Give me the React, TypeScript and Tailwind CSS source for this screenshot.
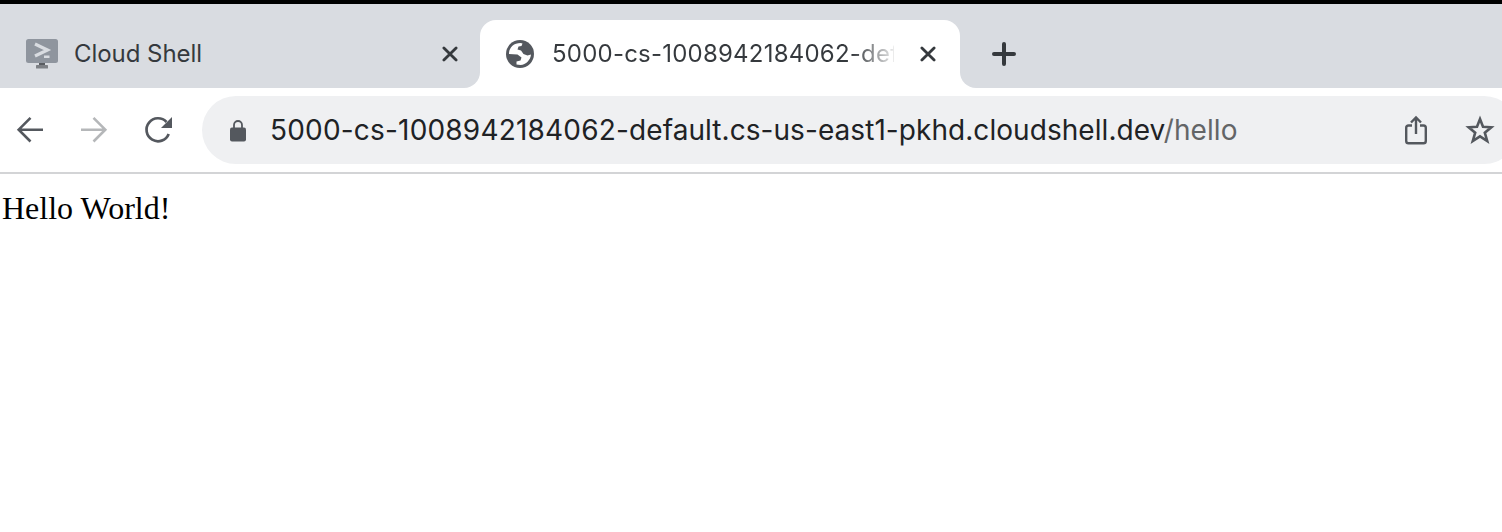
import React from "react";

function CloseIcon() {
  return (
    <svg className="size-4 shrink-0" viewBox="0 0 16 16" fill="none" stroke="#35393d" strokeWidth="2.8" strokeLinecap="round">
      <path d="M1.9 1.9L14.1 14.1M14.1 1.9L1.9 14.1" />
    </svg>
  );
}

function ShellIcon() {
  return (
    <svg className="h-[30px] w-8 shrink-0" viewBox="0 0 32 30">
      <rect width="32" height="24" rx="2.5" fill="#8f959e" />
      <path d="M9 5L21.5 11L9 17" fill="none" stroke="#d9dce1" strokeWidth="3.2" />
      <rect x="18" y="16.5" width="5.5" height="2.5" fill="#d9dce1" />
      <rect x="13" y="24" width="6" height="3" fill="#595c61" />
      <rect x="10" y="26" width="12" height="3.5" rx="0.6" fill="#7d8085" />
    </svg>
  );
}

function GlobeIcon() {
  return (
    <svg className="size-7 shrink-0" viewBox="0 0 28 28">
      <circle cx="14" cy="14" r="14" fill="#54585e" />
      <path d="M3 13C3.500 7 8 3 14.500 3L16.500 3.500L15.500 6L12.500 6.500L11.500 9.500L15 10.500L17.500 14L21.500 15.500L25 14.500C24.500 20 20 24.500 14.500 25L10.500 24.500V21.500L14.500 20.500L15.500 17.500L11.500 14.500L3 14Z" fill="#fff" />
    </svg>
  );
}

export default function App() {
  return (
    <div className="h-[532px] w-[1502px] overflow-hidden bg-white font-['Inter',sans-serif]">
      <header>
        <div className="h-1 bg-black" />
        <div className="h-4 bg-[#d9dce1]" />
        <div className="flex h-[68px]">
          <div className="flex w-[480px] items-center rounded-br-2xl bg-[#d9dce1] pl-[26px] pr-[22px]">
            <ShellIcon />
            <span className="ml-4 flex-1 whitespace-nowrap text-[24px] leading-[68px] tracking-[-0.05px] text-[#35393d]">Cloud Shell</span>
            <CloseIcon />
          </div>
          <div className="w-[480px] bg-[#d9dce1]">
            <div className="flex h-full items-center rounded-t-2xl bg-white pl-[26px] pr-6">
              <GlobeIcon />
              <span className="ml-[18px] w-[342px] overflow-hidden whitespace-nowrap bg-linear-to-r from-[#35393d] from-[88%] to-[#35393d]/10 bg-clip-text text-[24px] leading-[68px] tracking-[0.22px] text-transparent">
                5000-cs-1008942184062-default
              </span>
              <span className="flex-1" />
              <CloseIcon />
            </div>
          </div>
          <div className="flex flex-1 items-center rounded-bl-2xl bg-[#d9dce1] pl-8">
            <svg className="size-6" viewBox="0 0 24 24" stroke="#35393d" strokeWidth="4" strokeLinecap="round">
              <path d="M12 2V22M2 12H22" />
            </svg>
          </div>
        </div>
        <div className="flex h-[86px] items-start border-b-2 border-[#d3d4d6] pt-2">
          <div className="flex h-[68px] w-[202px] shrink-0 items-center pl-4">
            <svg className="h-7 w-7" viewBox="0 0 28 28" fill="none" stroke="#54585e" strokeWidth="2.6">
              <path d="M27 13.700H2.800M14.500 1.900L2.700 13.700L14.500 25.500" />
            </svg>
            <svg className="ml-9 h-7 w-7" viewBox="0 0 28 28" fill="none" stroke="#b5b7b9" strokeWidth="2.600">
              <path d="M1 13.700H25.200M13.500 1.900L25.300 13.700L13.500 25.500" />
            </svg>
            <svg className="ml-9 h-7 w-7" viewBox="0 0 28 28" fill="none">
              <path d="M22.500 6A11.500 11.500 0 1 0 24.700 18" stroke="#54585e" strokeWidth="2.700" />
              <path d="M28 1V12H17Z" fill="#54585e" />
            </svg>
          </div>
          <div className="flex h-[68px] w-[1316px] shrink-0 items-center rounded-full bg-[#eff0f2] pl-7">
            <svg className="mt-0.5 h-[22px] w-4" viewBox="0 0 16 22">
              <rect y="7.500" width="16" height="14" rx="2" fill="#54585e" />
              <path d="M4 8V5A4 4 0 0 1 12 5V8" fill="none" stroke="#54585e" strokeWidth="1.800" />
            </svg>
            <div className="ml-6 w-[1134px] whitespace-nowrap text-[28px] leading-[42px] tracking-[0.06px] text-[#202225]">
              <span className="tracking-[0.19px]">5000-cs-1008942184062-</span>default.cs-us-east1-pkhd.cloudshell.dev<span className="text-[#636567]">/hello</span>
            </div>
            <svg className="h-[30px] w-6 shrink-0" viewBox="0 0 24 30" fill="none" stroke="#54585e" strokeWidth="2.400">
              <path d="M8 10.500H4.500Q2.200 10.500 2.200 12.800V26Q2.200 28.300 4.500 28.300H19.500Q21.800 28.300 21.800 26V12.800Q21.800 10.500 19.500 10.500H16M12 19V2.500M7 7.500L12 2.500L17 7.500" />
            </svg>
            <svg className="ml-[37px] h-[30px] w-[30px] shrink-0" viewBox="0 0 30 30" fill="none" stroke="#54585e" strokeWidth="2.600">
              <path d="M15 4L18 11.800L26.300 12.300L19.800 17.700L22.200 26L15 21.300L7.800 26L10.200 17.700L3.700 12.300L12 11.800Z" />
            </svg>
          </div>
        </div>
      </header>
      <main className="pl-0.5 pt-4 font-['Liberation_Serif',serif] text-[32px] leading-[37px] text-black">Hello World!</main>
    </div>
  );
}
